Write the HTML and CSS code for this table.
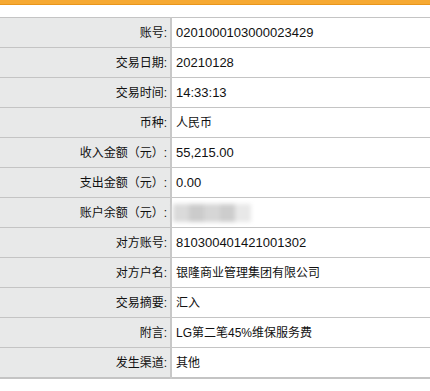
FILE: index.html
```html
<!DOCTYPE html>
<html lang="zh-CN">
<head>
<meta charset="utf-8">
<title>交易详情</title>
<link rel="stylesheet" href="styles.css">
</head>
<body>
<div class="topbar"></div>
<div class="gap"></div>
<table class="detail">
  <tr><th>账号:</th><td><span class="num">0201000103000023429</span></td></tr>
  <tr><th>交易日期:</th><td><span class="num">20210128</span></td></tr>
  <tr><th>交易时间:</th><td><span class="num">14:33:13</span></td></tr>
  <tr><th>币种:</th><td>人民币</td></tr>
  <tr><th>收入金额（元）:</th><td><span class="num">55,215.00</span></td></tr>
  <tr><th>支出金额（元）:</th><td><span class="num">0.00</span></td></tr>
  <tr><th>账户余额（元）:</th><td><div class="masked"><span></span><span></span><span></span><span></span><span></span></div></td></tr>
  <tr><th>对方账号:</th><td><span class="num">810300401421001302</span></td></tr>
  <tr><th>对方户名:</th><td>银隆商业管理集团有限公司</td></tr>
  <tr><th>交易摘要:</th><td>汇入</td></tr>
  <tr><th>附言:</th><td>LG第二笔45%维保服务费</td></tr>
  <tr><th>发生渠道:</th><td>其他</td></tr>
</table>
</body>
</html>
```
FILE: styles.css
```css
html, body {
  margin: 0;
  padding: 0;
  background: #ffffff;
}
body {
  font-family: "Liberation Sans", "Noto Sans CJK SC", sans-serif;
  font-size: 12px;
  color: #111111;
}
.topbar {
  height: 4px;
  background: #f6a933;
  border-bottom: 1px solid #e9961c;
}
.gap {
  height: 12px;
}
.detail {
  width: 100%;
  border-collapse: collapse;
  border-top: 1px solid #c4c4c4;
  border-bottom: 2px solid #c4c4c4;
}
.detail tr {
  height: 30px;
}
.detail th, .detail td {
  border-bottom: 1px solid #c4c4c4;
  padding: 0;
  font-weight: normal;
  vertical-align: middle;
  height: 29px;
  line-height: 16px;
}
.detail th {
  width: 171px;
  background: #e8e9e9;
  text-align: right;
  padding-right: 3px;
  box-sizing: border-box;
  border-right: 2px solid #c8c8c8;
}
.detail td {
  text-align: left;
  padding-left: 4px;
}
.num {
  font-size: 13px;
}
.masked {
  display: flex;
  width: 78px;
  height: 18px;
  margin-left: -3px;
  filter: blur(2px);
}
.masked span {
  flex: 1;
  background: #dadada;
}
.masked span:nth-child(2) { background: #cbcbcb; }
.masked span:nth-child(3) { background: #d6d6d6; }
.masked span:nth-child(4) { background: #cdcdcd; }
.masked span:nth-child(5) { background: #e8e8e8; }
```
